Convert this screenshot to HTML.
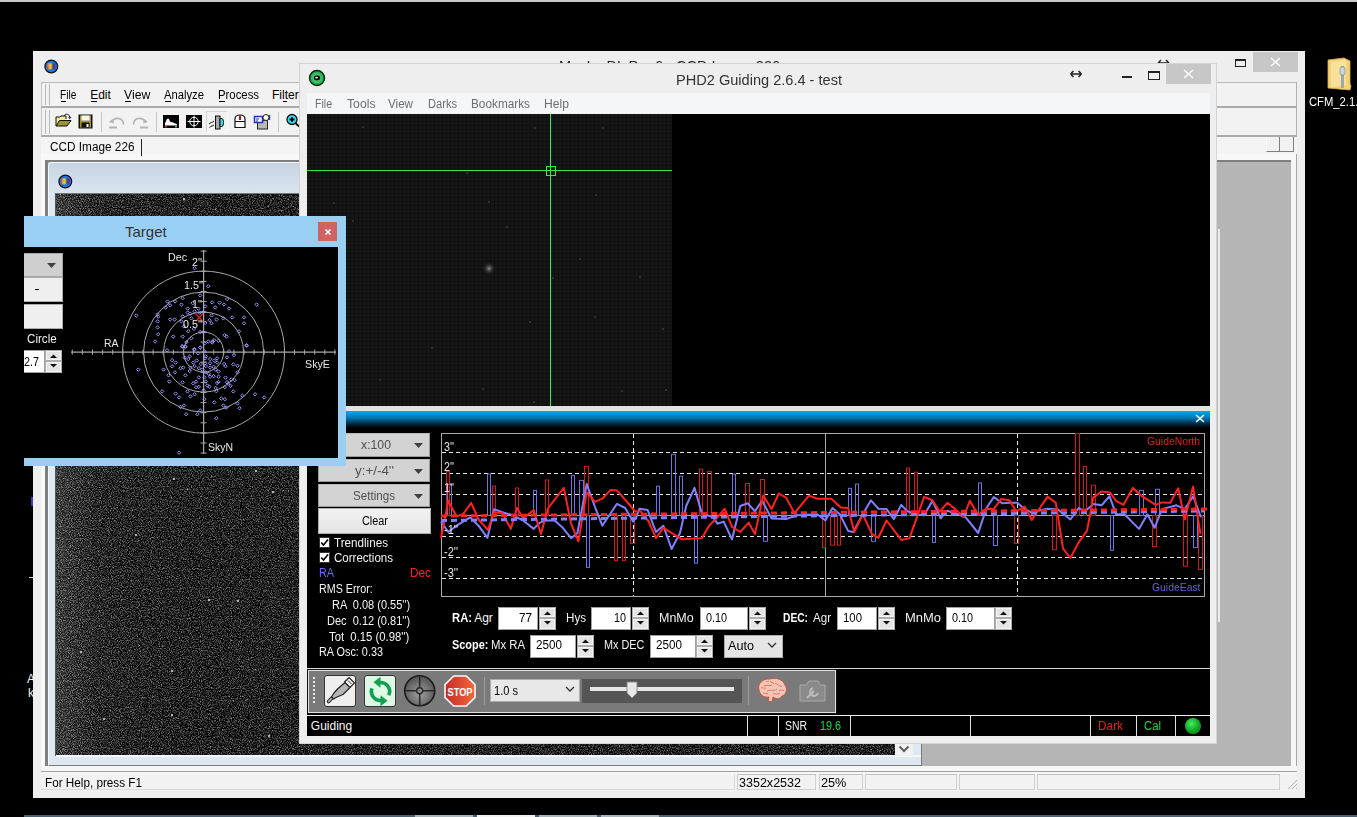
<!DOCTYPE html>
<html><head><meta charset="utf-8">
<style>
*{margin:0;padding:0;box-sizing:border-box}
html,body{width:1357px;height:817px;overflow:hidden;background:#000;font-family:"Liberation Sans",sans-serif;font-size:12px;color:#000;position:relative}
.a{position:absolute}
.t{position:absolute;line-height:1;white-space:pre}
svg{position:absolute;overflow:visible}
</style></head><body>
<div class="a" style="left:0px;top:0px;width:1357px;height:2px;background:#cacaca"></div>
<div class="a" style="left:24px;top:815px;width:1333px;height:2px;background:#4a6172"></div>
<div class="a" style="left:415px;top:815px;width:58px;height:2px;background:#a9b5bd"></div>
<div class="a" style="left:477px;top:815px;width:58px;height:2px;background:#f2f2f2"></div>
<div class="a" style="left:539px;top:815px;width:58px;height:2px;background:#a9b5bd"></div>
<div class="a" style="left:601px;top:815px;width:58px;height:2px;background:#a9b5bd"></div>
<div class="a" style="left:31px;top:497px;width:2px;height:9px;background:#3040c0"></div>
<div class="t" style="left:27.00px;top:672.84px;font-size:12px;color:#f0f0f0;">A</div>
<div class="t" style="left:28.00px;top:686.84px;font-size:12px;color:#f0f0f0;">k</div>
<div class="a" style="left:29px;top:577px;width:4px;height:1px;background:#d0d0d0"></div>
<div class="a" style="left:33px;top:51px;width:1272px;height:747px;background:#eeeeee"></div>
<svg style="left:44px;top:59px" width="15" height="15"><defs><linearGradient id="rb" x1="0" x2="1"><stop offset="0" stop-color="#f04a30"/><stop offset="0.3" stop-color="#f8b040"/><stop offset="0.45" stop-color="#d8d040"/><stop offset="0.62" stop-color="#30a040"/><stop offset="0.7" stop-color="#2050b0"/><stop offset="0.78" stop-color="#8020a0"/><stop offset="1" stop-color="#8020a0"/></linearGradient></defs><circle cx="7.3" cy="7.5" r="6.4" fill="#1a78e0" stroke="#111" stroke-width="1.2"/><rect x="3.2" y="4.3" width="8.3" height="6" fill="url(#rb)"/></svg>
<div class="t" style="left:558.60px;top:58.30px;font-size:15px;color:#222;transform:scaleX(0.9664);transform-origin:0 0;">MaxIm DL Pro 6 - CCD Image 226</div>
<div class="a" style="left:1235px;top:59px;width:11px;height:8px;border:1px solid #222;border-top-width:2px"></div>
<div class="a" style="left:1253px;top:52px;width:45px;height:20px;background:#c7c7c7"></div>
<svg style="left:1270px;top:57px" width="11" height="10"><path d="M1 1L10 9M10 1L1 9" stroke="#fff" stroke-width="1.4"/></svg>
<svg style="left:1157px;top:59px" width="13" height="8"><path d="M1 4H12M1 4L4 1M1 4L4 7M12 4L9 1M12 4L9 7" stroke="#222" stroke-width="1.4" fill="none"/></svg>
<div class="a" style="left:41px;top:82px;width:1256px;height:26px;background:#f2f2f2;border-top:1px solid #b8b8b8;border-left:1px solid #c4c4c4;border-right:1px solid #b0b0b0;border-bottom:2px solid #ababab"></div>
<div class="a" style="left:45px;top:84px;width:1px;height:21px;background:#b8b8b8"></div>
<div class="a" style="left:49px;top:84px;width:1px;height:21px;background:#b8b8b8"></div>
<div class="t" style="left:60.10px;top:88.84px;font-size:12px;color:#000;transform:scaleX(0.8426);transform-origin:0 0;">File</div>
<div class="t" style="left:90.20px;top:88.84px;font-size:12px;color:#000;">Edit</div>
<div class="t" style="left:124.30px;top:88.84px;font-size:12px;color:#000;transform:scaleX(1.0195);transform-origin:0 0;">View</div>
<div class="t" style="left:164.00px;top:88.84px;font-size:12px;color:#000;transform:scaleX(0.9367);transform-origin:0 0;">Analyze</div>
<div class="t" style="left:218.00px;top:88.84px;font-size:12px;color:#000;transform:scaleX(0.9456);transform-origin:0 0;">Process</div>
<div class="t" style="left:272.00px;top:88.84px;font-size:12px;color:#000;">Filter</div>
<div class="a" style="left:61px;top:101px;width:5px;height:1px;background:#000"></div>
<div class="a" style="left:91px;top:101px;width:6px;height:1px;background:#000"></div>
<div class="a" style="left:125px;top:101px;width:6px;height:1px;background:#000"></div>
<div class="a" style="left:165px;top:101px;width:6px;height:1px;background:#000"></div>
<div class="a" style="left:219px;top:101px;width:6px;height:1px;background:#000"></div>
<div class="a" style="left:283px;top:101px;width:4px;height:1px;background:#000"></div>
<div class="a" style="left:41px;top:108px;width:1256px;height:29px;background:#f2f2f2;border-left:1px solid #c4c4c4;border-right:1px solid #b0b0b0;border-bottom:2px solid #ababab"></div>
<div class="a" style="left:45px;top:110px;width:1px;height:24px;background:#b8b8b8"></div>
<div class="a" style="left:49px;top:110px;width:1px;height:24px;background:#b8b8b8"></div>
<div class="a" style="left:101px;top:112px;width:1px;height:20px;background:#c6c6c6"></div>
<div class="a" style="left:156px;top:112px;width:1px;height:20px;background:#c6c6c6"></div>
<div class="a" style="left:278px;top:112px;width:1px;height:20px;background:#c6c6c6"></div>
<div class="a" style="left:206px;top:111px;width:22px;height:21px;background:#f2f2f2;border:1px solid #d6d6d6;border-right-color:#f8f8f8;border-bottom-color:#f8f8f8"></div>
<svg style="left:55px;top:113px" width="17" height="15"><path d="M1 13V4H5L6 3H11V6" fill="#f4ec98" stroke="#111" stroke-width="1"/><path d="M1 13L4.5 7.5H16L12 13Z" fill="#9a9434" stroke="#111" stroke-width="1"/><path d="M9 3C10 0.5 13 0.5 14.5 3L15 5M13.5 4.5L15 5.5L16 4" stroke="#111" stroke-width="1" fill="none"/></svg>
<svg style="left:78px;top:114px" width="16" height="15"><rect x="0.5" y="0.5" width="14" height="14" fill="#111"/><rect x="2" y="1.5" width="11" height="12" fill="#a09434"/><rect x="3.5" y="1.5" width="8" height="5" fill="#f4f4f4"/><rect x="3.5" y="8.5" width="8" height="5" fill="#111"/><rect x="8.5" y="10" width="2" height="3" fill="#f4f4f4"/></svg>
<svg style="left:108px;top:116px" width="18" height="13"><path d="M4 6A6 6 0 0 1 15.5 8.5" stroke="#b4b4b4" stroke-width="1.6" fill="none"/><path d="M1 6L4.5 3L6 7.5Z" fill="#b4b4b4"/><rect x="1" y="10.5" width="8" height="2" fill="#b4b4b4"/></svg>
<svg style="left:131px;top:116px" width="18" height="13"><path d="M14 6A6 6 0 0 0 2.5 8.5" stroke="#b4b4b4" stroke-width="1.6" fill="none"/><path d="M17 6L13.5 3L12 7.5Z" fill="#b4b4b4"/><rect x="9" y="10.5" width="8" height="2" fill="#b4b4b4"/></svg>
<svg style="left:163px;top:115px" width="16" height="14"><rect width="16" height="13" fill="#000"/><path d="M2 10.5V8C3 7 3.5 3.5 5 3.5C6.5 3.5 6.5 7 8 7C10 7 11 8.5 14 9V10.5Z" fill="#fff"/><rect x="2" y="11" width="2" height="1.5" fill="#e02020"/><rect x="12" y="11" width="2" height="1.5" fill="#20d040"/></svg>
<svg style="left:186px;top:115px" width="16" height="13"><rect width="16" height="13" fill="#000"/><circle cx="8" cy="6.5" r="4.2" stroke="#fff" stroke-width="1" fill="none"/><path d="M1.5 6.5H14.5M8 0.5V12.5" stroke="#fff" stroke-width="1"/></svg>
<svg style="left:208px;top:115px" width="18" height="15"><path d="M1 9C3 7 4 8 6 6M1.5 12.5C3.5 10.5 4.5 11.5 6 10" stroke="#111" stroke-width="1" fill="none"/><rect x="7.5" y="1" width="4.5" height="13" fill="#a8a8a8" stroke="#111" stroke-width="1"/><path d="M12 3.5H14C16 4 16 11 14 11.5H12Z" fill="#40d8e8" stroke="#111" stroke-width="1"/></svg>
<svg style="left:234px;top:114px" width="12" height="15"><path d="M1 13.5V5C1 2 3 1 6 1C9 1 11 2 11 5V13.5Z" fill="#fff" stroke="#111" stroke-width="1.2"/><rect x="5" y="1.5" width="2" height="4.5" fill="#b01818"/><path d="M1 7.5H11" stroke="#111" stroke-width="1"/></svg>
<svg style="left:254px;top:113px" width="18" height="17"><rect x="3.5" y="7.5" width="10" height="8.5" fill="#b8b8b8" stroke="#222" stroke-width="1"/><rect x="0.5" y="3.5" width="8" height="6" fill="#fff" stroke="#2030c0" stroke-width="1.5"/><path d="M2 6H5M2 8H4" stroke="#2030c0" stroke-width="1"/><circle cx="12" cy="4.5" r="3" fill="#fff" stroke="#222" stroke-width="1"/><path d="M15.5 2V7" stroke="#2030c0" stroke-width="1.4"/></svg>
<svg style="left:286px;top:113px" width="14" height="15"><circle cx="6" cy="6.5" r="5" fill="#30e0f0" stroke="#111" stroke-width="1.3"/><path d="M3.5 6.5H8.5M6 4V9" stroke="#000" stroke-width="1.8"/><path d="M9.5 10L13 13.5" stroke="#111" stroke-width="1.8"/></svg>
<div class="a" style="left:41px;top:137px;width:1256px;height:23px;background:#f4f4f4"></div>
<div class="a" style="left:41px;top:154px;width:1256px;height:7px;background:#f8f8f8"></div>
<div class="t" style="left:50.20px;top:140.84px;font-size:12px;color:#000;transform:scaleX(0.9820);transform-origin:0 0;">CCD Image 226</div>
<div class="a" style="left:141px;top:139px;width:1px;height:17px;background:#222"></div>
<div class="a" style="left:1266px;top:137px;width:28px;height:15px;background:#f2f2f2;border-bottom:1px solid #808080;border-right:1px solid #808080;border-left:1px solid #fff"></div>
<div class="a" style="left:1279px;top:137px;width:1px;height:14px;background:#808080"></div>
<div class="a" style="left:41px;top:154px;width:4px;height:617px;background:#f9f9f9"></div>
<div class="a" style="left:45px;top:160px;width:1246px;height:606px;background:#b5b5b5;border-top:2px solid #7f7f7f;border-left:3px solid #7f7f7f"></div>
<div class="a" style="left:1291px;top:160px;width:5px;height:611px;background:#f6f6f6"></div>
<div class="a" style="left:1218px;top:229px;width:2px;height:393px;background:#ececec"></div>
<div class="a" style="left:1296px;top:154px;width:1px;height:618px;background:#a9a9a9"></div>
<div class="a" style="left:41px;top:766px;width:1256px;height:5px;background:#f6f6f6"></div>
<div class="a" style="left:41px;top:771px;width:1256px;height:1px;background:#a0a0a0"></div>
<div class="a" style="left:48px;top:162px;width:874px;height:604px;background:linear-gradient(#c6d4e1 0px,#d9e5f1 30px,#dde8f3 40px);border-right:1px solid #7a7a7a;border-bottom:1px solid #7a7a7a;border-top-left-radius:4px;border-top:1px solid #f4f8fc;border-left:1px solid #f4f8fc"></div>
<div class="a" style="left:55px;top:193px;width:840px;height:563px;background:#2a2a2a;border-left:1px solid #555;border-top:1px solid #777"></div>
<svg style="left:56px;top:194px" width="839" height="562"><filter id="nz" color-interpolation-filters="sRGB" x="0" y="0" width="100%" height="100%"><feTurbulence type="fractalNoise" baseFrequency="0.9" numOctaves="2" seed="7"/><feColorMatrix type="matrix" values="1.3 0 0 0 -0.53  1.3 0 0 0 -0.53  1.3 0 0 0 -0.53  0 0 0 0 1"/></filter><rect width="839" height="562" filter="url(#nz)"/><rect width="839" height="562" fill="url(#vg)"/><defs><linearGradient id="vg" x1="0" x2="1"><stop offset="0" stop-color="#fff" stop-opacity="0.14"/><stop offset="0.05" stop-color="#fff" stop-opacity="0.03"/><stop offset="0.15" stop-color="#fff" stop-opacity="0"/></linearGradient></defs><rect x="115" y="476" width="2" height="2" fill="#b4b4b4"/><rect x="115" y="520" width="2" height="2" fill="#b4b4b4"/><rect x="218" y="194" width="1" height="1" fill="#b4b4b4"/><rect x="47" y="524" width="2" height="2" fill="#b4b4b4"/><rect x="121" y="190" width="2" height="2" fill="#b4b4b4"/><rect x="24" y="457" width="2" height="2" fill="#b4b4b4"/><rect x="77" y="145" width="1" height="1" fill="#b4b4b4"/><rect x="23" y="551" width="1" height="1" fill="#b4b4b4"/><rect x="207" y="42" width="2" height="2" fill="#b4b4b4"/><rect x="152" y="405" width="2" height="2" fill="#b4b4b4"/><rect x="115" y="161" width="1" height="1" fill="#b4b4b4"/><rect x="159" y="15" width="1" height="1" fill="#b4b4b4"/><rect x="212" y="541" width="2" height="2" fill="#b4b4b4"/><rect x="16" y="60" width="1" height="1" fill="#b4b4b4"/><rect x="9" y="194" width="2" height="2" fill="#b4b4b4"/><rect x="225" y="247" width="1" height="1" fill="#b4b4b4"/><rect x="153" y="30" width="2" height="2" fill="#b4b4b4"/><rect x="199" y="475" width="1" height="1" fill="#b4b4b4"/><rect x="83" y="451" width="1" height="1" fill="#b4b4b4"/><rect x="151" y="200" width="2" height="2" fill="#b4b4b4"/><rect x="132" y="239" width="2" height="2" fill="#b4b4b4"/><rect x="163" y="301" width="1" height="1" fill="#b4b4b4"/><rect x="127" y="4" width="2" height="2" fill="#b4b4b4"/><rect x="169" y="87" width="1" height="1" fill="#b4b4b4"/><rect x="117" y="284" width="2" height="2" fill="#b4b4b4"/><rect x="104" y="85" width="2" height="2" fill="#b4b4b4"/><rect x="181" y="260" width="2" height="2" fill="#b4b4b4"/><rect x="80" y="235" width="2" height="2" fill="#b4b4b4"/><rect x="131" y="295" width="1" height="1" fill="#b4b4b4"/><rect x="7" y="71" width="1" height="1" fill="#b4b4b4"/><rect x="144" y="110" width="1" height="1" fill="#b4b4b4"/><rect x="102" y="110" width="1" height="1" fill="#b4b4b4"/><rect x="216" y="297" width="2" height="2" fill="#b4b4b4"/><rect x="98" y="68" width="1" height="1" fill="#b4b4b4"/><rect x="4" y="0" width="1" height="1" fill="#b4b4b4"/><rect x="54" y="214" width="1" height="1" fill="#b4b4b4"/><rect x="237" y="53" width="1" height="1" fill="#b4b4b4"/><rect x="120" y="384" width="1" height="1" fill="#b4b4b4"/><rect x="181" y="406" width="2" height="2" fill="#b4b4b4"/><rect x="107" y="74" width="2" height="2" fill="#b4b4b4"/><rect x="144" y="203" width="2" height="2" fill="#b4b4b4"/><rect x="199" y="276" width="2" height="2" fill="#b4b4b4"/><rect x="86" y="89" width="2" height="2" fill="#b4b4b4"/><rect x="79" y="340" width="2" height="2" fill="#b4b4b4"/><rect x="3" y="419" width="1" height="1" fill="#b4b4b4"/></svg>
<div class="a" style="left:56px;top:755px;width:865px;height:2px;background:#f6f9fc"></div>
<div class="a" style="left:895px;top:744px;width:18px;height:12px;background:#f0f0f0"></div>
<svg style="left:898px;top:745px" width="12" height="8"><path d="M1.5 1.5L6 6L10.5 1.5" stroke="#606060" stroke-width="2" fill="none"/></svg>
<svg style="left:58px;top:174px" width="15" height="15"><circle cx="7.3" cy="7.5" r="6.4" fill="#1a78e0" stroke="#111" stroke-width="1.2"/><rect x="3.2" y="4.3" width="8.3" height="6" fill="url(#rb)"/></svg>
<div class="a" style="left:41px;top:772px;width:1256px;height:2px;background:#f6f6f6"></div>
<div class="a" style="left:41px;top:774px;width:1256px;height:1px;background:#f2f2f2"></div>
<div class="a" style="left:41px;top:775px;width:1256px;height:16px;background:#f2f2f2"></div>
<div class="t" style="left:45.10px;top:776.54px;font-size:12px;color:#000;transform:scaleX(0.9761);transform-origin:0 0;">For Help, press F1</div>
<div class="a" style="left:41px;top:774px;width:694px;height:16px;border-bottom:1px solid #dadada;border-right:1px solid #dadada"></div>
<div class="a" style="left:737px;top:774px;width:79px;height:16px;border:1px solid #d0d0d0;border-top-color:#c0c0c0"></div>
<div class="a" style="left:819px;top:774px;width:44px;height:16px;border:1px solid #d0d0d0;border-top-color:#c0c0c0"></div>
<div class="a" style="left:865px;top:774px;width:92px;height:16px;border:1px solid #d0d0d0;border-top-color:#c0c0c0"></div>
<div class="a" style="left:959px;top:774px;width:76px;height:16px;border:1px solid #d0d0d0;border-top-color:#c0c0c0"></div>
<div class="a" style="left:1037px;top:774px;width:243px;height:16px;border:1px solid #d0d0d0;border-top-color:#c0c0c0"></div>
<div class="t" style="left:738.70px;top:776.84px;font-size:12px;color:#000;transform:scaleX(1.0439);transform-origin:0 0;">3352x2532</div>
<div class="t" style="left:821.00px;top:776.84px;font-size:12px;color:#000;transform:scaleX(1.0570);transform-origin:0 0;">25%</div>
<svg style="left:1286px;top:778px" width="12" height="12"><path d="M11 2L2 11M11 6L6 11M11 10L10 11" stroke="#b0b0b0" stroke-width="1"/></svg>
<svg style="left:1327px;top:58px" width="26" height="34"><path d="M1 2L17 0L23 3L23 26L24 28L23 32L1 30Z" fill="#f3d27a" stroke="#d8b050" stroke-width="0.8"/><path d="M4 4L19 2L19 27L4 29Z" fill="#f8e29a"/><rect x="14" y="8" width="3" height="22" fill="#9aa8b8"/><rect x="13" y="9" width="5" height="8" rx="2" fill="#c8d4e0" stroke="#708090" stroke-width="0.6"/></svg>
<div class="t" style="left:1308.60px;top:96.44px;font-size:12px;color:#fff;transform:scaleX(0.9372);transform-origin:0 0;">CFM_2.1.c</div>
<div class="a" style="left:299px;top:63px;width:918px;height:681px;background:#eeeeee;border:1px solid #d4d4d4"></div>
<svg style="left:308px;top:69px" width="18" height="18"><defs><radialGradient id="gg"><stop offset="0.3" stop-color="#60d080"/><stop offset="1" stop-color="#10a040"/></radialGradient></defs><circle cx="9" cy="9" r="7.5" fill="url(#gg)" stroke="#0a2a10" stroke-width="1.4"/><ellipse cx="9" cy="8.8" rx="3.2" ry="2.6" fill="#111"/><ellipse cx="8.6" cy="8.6" rx="1.4" ry="0.9" fill="#eee"/></svg>
<div class="t" style="left:675.50px;top:71.50px;font-size:15px;color:#333;transform:scaleX(0.9712);transform-origin:0 0;">PHD2 Guiding 2.6.4 - test</div>
<svg style="left:1069px;top:70px" width="14" height="8"><path d="M1.5 4H12.5M1.5 4L4.5 1M1.5 4L4.5 7M12.5 4L9.5 1M12.5 4L9.5 7" stroke="#222" stroke-width="1.5" fill="none"/></svg>
<div class="a" style="left:1122px;top:76px;width:10px;height:2px;background:#222"></div>
<div class="a" style="left:1148px;top:71px;width:12px;height:9px;border:1px solid #222;border-top-width:2px"></div>
<div class="a" style="left:1166px;top:64px;width:45px;height:20px;background:#c7c7c7"></div>
<svg style="left:1183px;top:69px" width="11" height="10"><path d="M1 1L10 9M10 1L1 9" stroke="#fff" stroke-width="1.4"/></svg>
<div class="a" style="left:307px;top:93px;width:903px;height:21px;background:#f5f6f7"></div>
<div class="t" style="left:315.00px;top:97.84px;font-size:12px;color:#6d6d6d;transform:scaleX(0.8788);transform-origin:0 0;">File</div>
<div class="t" style="left:346.50px;top:97.84px;font-size:12px;color:#6d6d6d;transform:scaleX(1.0173);transform-origin:0 0;">Tools</div>
<div class="t" style="left:388.00px;top:97.84px;font-size:12px;color:#6d6d6d;transform:scaleX(0.9691);transform-origin:0 0;">View</div>
<div class="t" style="left:428.00px;top:97.84px;font-size:12px;color:#6d6d6d;transform:scaleX(0.9252);transform-origin:0 0;">Darks</div>
<div class="t" style="left:471.00px;top:97.84px;font-size:12px;color:#6d6d6d;transform:scaleX(0.9828);transform-origin:0 0;">Bookmarks</div>
<div class="t" style="left:544.00px;top:97.84px;font-size:12px;color:#6d6d6d;transform:scaleX(1.0127);transform-origin:0 0;">Help</div>
<div class="a" style="left:307px;top:114px;width:903px;height:293px;background:#000"></div>
<div class="a" style="left:307px;top:114px;width:365px;height:292px;background:repeating-linear-gradient(90deg,transparent 0px,transparent 3px,rgba(0,0,0,0.25) 3px,rgba(0,0,0,0.25) 4px),repeating-linear-gradient(#161616 0px,#161616 3px,#101010 3px,#101010 4px)"></div>
<div class="a" style="left:307px;top:406px;width:903px;height:5px;background:#e2e2e2"></div>
<svg style="left:0;top:0" width="1357" height="817"><defs><radialGradient id="sg"><stop offset="0" stop-color="#909090"/><stop offset="0.25" stop-color="#505050"/><stop offset="1" stop-color="#181818" stop-opacity="0"/></radialGradient></defs><rect x="362" y="126" width="2" height="2" fill="#303030"/><rect x="534" y="127" width="2" height="2" fill="#303030"/><rect x="602" y="127" width="2" height="2" fill="#303030"/><rect x="466" y="172" width="2" height="2" fill="#303030"/><rect x="595" y="194" width="2" height="2" fill="#303030"/><rect x="333" y="202" width="2" height="2" fill="#303030"/><rect x="352" y="220" width="2" height="2" fill="#303030"/><rect x="488" y="201" width="2" height="2" fill="#303030"/><rect x="506" y="226" width="2" height="2" fill="#303030"/><rect x="579" y="258" width="2" height="2" fill="#303030"/><rect x="552" y="277" width="2" height="2" fill="#303030"/><rect x="639" y="276" width="2" height="2" fill="#303030"/><rect x="529" y="321" width="2" height="2" fill="#303030"/><rect x="594" y="316" width="2" height="2" fill="#303030"/><rect x="379" y="379" width="2" height="2" fill="#303030"/><rect x="431" y="347" width="2" height="2" fill="#303030"/><rect x="662" y="328" width="2" height="2" fill="#303030"/><rect x="621" y="390" width="2" height="2" fill="#303030"/><rect x="665" y="389" width="2" height="2" fill="#303030"/><rect x="533" y="401" width="2" height="2" fill="#303030"/><rect x="482" y="388" width="2" height="2" fill="#303030"/><circle cx="489" cy="268.5" r="7" fill="url(#sg)"/></svg>
<div class="a" style="left:307px;top:170px;width:365px;height:1px;background:#2cf048"></div>
<div class="a" style="left:550px;top:114px;width:1px;height:292px;background:#2cf048"></div>
<div class="a" style="left:546px;top:166px;width:10px;height:10px;border:1px solid #2cf048"></div>
<div class="a" style="left:307px;top:411px;width:903px;height:258px;background:#000"></div>
<div class="a" style="left:307px;top:411px;width:903px;height:17px;background:linear-gradient(#00a8f2,#0078b0 40%,#002a40 75%,#000)"></div>
<svg style="left:1195px;top:414px" width="10" height="9"><path d="M1 1L9 8M9 1L1 8" stroke="#fff" stroke-width="1.6"/></svg>
<div class="a" style="left:318px;top:433px;width:112px;height:24px;background:#d3d3d3;border:1px solid #9a9a9a;border-top-color:#b8b8b8"></div>
<div class="t" style="left:361.00px;top:439.14px;font-size:12px;color:#505050;transform:scaleX(1.0218);transform-origin:0 0;">x:100</div>
<svg style="left:414px;top:443.0px" width="10" height="6"><path d="M0 0H9L4.5 5Z" fill="#404040"/></svg>
<div class="a" style="left:318px;top:459px;width:112px;height:23px;background:#d3d3d3;border:1px solid #9a9a9a;border-top-color:#b8b8b8"></div>
<div class="t" style="left:355.00px;top:464.64px;font-size:12px;color:#505050;transform:scaleX(1.1163);transform-origin:0 0;">y:+/-4''</div>
<svg style="left:414px;top:468.5px" width="10" height="6"><path d="M0 0H9L4.5 5Z" fill="#404040"/></svg>
<div class="a" style="left:318px;top:484px;width:112px;height:23px;background:#d3d3d3;border:1px solid #9a9a9a;border-top-color:#b8b8b8"></div>
<div class="t" style="left:353.00px;top:489.64px;font-size:12px;color:#505050;transform:scaleX(0.9686);transform-origin:0 0;">Settings</div>
<svg style="left:414px;top:493.5px" width="10" height="6"><path d="M0 0H9L4.5 5Z" fill="#404040"/></svg>
<div class="a" style="left:318px;top:508px;width:113px;height:26px;background:linear-gradient(#f2f2f2,#e4e4e4);border:1px solid #adadad"></div>
<div class="t" style="left:361.50px;top:515.14px;font-size:12px;color:#000;transform:scaleX(0.9063);transform-origin:0 0;">Clear</div>
<div class="a" style="left:319px;top:537px;width:11px;height:11px;background:#fff;border:1px solid #333"></div>
<svg style="left:320px;top:538px" width="9" height="9"><path d="M1.2 4.5L3.5 7L8 1.5" stroke="#000" stroke-width="1.6" fill="none"/></svg>
<div class="t" style="left:334.10px;top:536.64px;font-size:12px;color:#f4f4f4;transform:scaleX(0.9713);transform-origin:0 0;">Trendlines</div>
<div class="a" style="left:319px;top:552px;width:11px;height:11px;background:#fff;border:1px solid #333"></div>
<svg style="left:320px;top:553px" width="9" height="9"><path d="M1.2 4.5L3.5 7L8 1.5" stroke="#000" stroke-width="1.6" fill="none"/></svg>
<div class="t" style="left:334.10px;top:551.64px;font-size:12px;color:#f4f4f4;transform:scaleX(0.9615);transform-origin:0 0;">Corrections</div>
<div class="t" style="left:318.70px;top:566.54px;font-size:12px;color:#6b6bff;transform:scaleX(0.8997);transform-origin:0 0;">RA</div>
<div class="t" style="left:410.00px;top:566.54px;font-size:12px;color:#ff2020;transform:scaleX(0.9839);transform-origin:0 0;">Dec</div>
<div class="t" style="left:318.70px;top:582.54px;font-size:12px;color:#f4f4f4;transform:scaleX(0.8950);transform-origin:0 0;">RMS Error:</div>
<div class="t" style="left:331.50px;top:598.54px;font-size:12px;color:#f4f4f4;transform:scaleX(0.9168);transform-origin:0 0;">RA  0.08 (0.55'')</div>
<div class="t" style="left:326.50px;top:614.84px;font-size:12px;color:#f4f4f4;transform:scaleX(0.9179);transform-origin:0 0;">Dec  0.12 (0.81'')</div>
<div class="t" style="left:329.40px;top:630.54px;font-size:12px;color:#f4f4f4;transform:scaleX(0.9414);transform-origin:0 0;">Tot  0.15 (0.98'')</div>
<div class="t" style="left:318.70px;top:646.24px;font-size:12px;color:#f4f4f4;transform:scaleX(0.9052);transform-origin:0 0;">RA Osc: 0.33</div>
<svg style="left:0px;top:0px" width="1357" height="817" viewBox="0 0 1357 817"><rect x="441.5" y="433.5" width="763" height="163" fill="#000" stroke="#a8a8a8" stroke-width="1"/><line x1="442" y1="452.5" x2="1204" y2="452.5" stroke="#e8e8e8" stroke-width="1" stroke-dasharray="4 3"/><line x1="442" y1="473.5" x2="1204" y2="473.5" stroke="#e8e8e8" stroke-width="1" stroke-dasharray="4 3"/><line x1="442" y1="494.5" x2="1204" y2="494.5" stroke="#e8e8e8" stroke-width="1" stroke-dasharray="4 3"/><line x1="442" y1="536.5" x2="1204" y2="536.5" stroke="#e8e8e8" stroke-width="1" stroke-dasharray="4 3"/><line x1="442" y1="557.5" x2="1204" y2="557.5" stroke="#e8e8e8" stroke-width="1" stroke-dasharray="4 3"/><line x1="442" y1="578.5" x2="1204" y2="578.5" stroke="#e8e8e8" stroke-width="1" stroke-dasharray="4 3"/><line x1="442" y1="515.5" x2="1204" y2="515.5" stroke="#a8a8a8" stroke-width="1"/><line x1="633.5" y1="434" x2="633.5" y2="596" stroke="#e8e8e8" stroke-width="1" stroke-dasharray="4 3"/><line x1="1017.5" y1="434" x2="1017.5" y2="596" stroke="#e8e8e8" stroke-width="1" stroke-dasharray="4 3"/><line x1="825.5" y1="434" x2="825.5" y2="596" stroke="#a8a8a8" stroke-width="1"/><rect x="447.5" y="484.5" width="4" height="31.0" fill="none" stroke="#7070e8" stroke-width="1"/><rect x="487.5" y="474.0" width="3" height="41.5" fill="none" stroke="#7070e8" stroke-width="1"/><rect x="533.5" y="490.4" width="3" height="25.1" fill="none" stroke="#7070e8" stroke-width="1"/><rect x="571.5" y="475.4" width="3" height="40.1" fill="none" stroke="#7070e8" stroke-width="1"/><rect x="579.5" y="480.4" width="4" height="35.1" fill="none" stroke="#7070e8" stroke-width="1"/><rect x="586.5" y="515.5" width="3" height="51.9" fill="none" stroke="#7070e8" stroke-width="1"/><rect x="656.5" y="486.2" width="3" height="29.3" fill="none" stroke="#7070e8" stroke-width="1"/><rect x="671.5" y="454.3" width="4" height="61.2" fill="none" stroke="#7070e8" stroke-width="1"/><rect x="679.5" y="476.2" width="3" height="39.3" fill="none" stroke="#7070e8" stroke-width="1"/><rect x="694.5" y="515.5" width="3" height="47.7" fill="none" stroke="#7070e8" stroke-width="1"/><rect x="732.5" y="474.1" width="3" height="41.4" fill="none" stroke="#7070e8" stroke-width="1"/><rect x="763.5" y="515.5" width="4" height="25.8" fill="none" stroke="#7070e8" stroke-width="1"/><rect x="848.5" y="488.3" width="3" height="27.2" fill="none" stroke="#7070e8" stroke-width="1"/><rect x="855.5" y="484.1" width="3" height="31.4" fill="none" stroke="#7070e8" stroke-width="1"/><rect x="871.5" y="515.5" width="4" height="25.8" fill="none" stroke="#7070e8" stroke-width="1"/><rect x="932.5" y="515.5" width="3" height="26.9" fill="none" stroke="#7070e8" stroke-width="1"/><rect x="978.5" y="483.0" width="3" height="32.5" fill="none" stroke="#7070e8" stroke-width="1"/><rect x="993.5" y="515.5" width="4" height="30.0" fill="none" stroke="#7070e8" stroke-width="1"/><rect x="1110.5" y="515.5" width="3" height="34.8" fill="none" stroke="#7070e8" stroke-width="1"/><rect x="1139.5" y="490.4" width="4" height="25.1" fill="none" stroke="#7070e8" stroke-width="1"/><rect x="1155.5" y="489.3" width="4" height="26.2" fill="none" stroke="#7070e8" stroke-width="1"/><rect x="1193.5" y="515.5" width="4" height="32.1" fill="none" stroke="#7070e8" stroke-width="1"/><rect x="446.5" y="471.6" width="3" height="43.9" fill="none" stroke="#d81818" stroke-width="1"/><rect x="492.5" y="486.0" width="3" height="29.5" fill="none" stroke="#d81818" stroke-width="1"/><rect x="515.5" y="488.0" width="3" height="27.5" fill="none" stroke="#d81818" stroke-width="1"/><rect x="545.5" y="480.0" width="3" height="35.5" fill="none" stroke="#d81818" stroke-width="1"/><rect x="584.5" y="466.4" width="4" height="49.1" fill="none" stroke="#d81818" stroke-width="1"/><rect x="614.5" y="515.5" width="3" height="45.2" fill="none" stroke="#d81818" stroke-width="1"/><rect x="622.5" y="515.5" width="3" height="45.2" fill="none" stroke="#d81818" stroke-width="1"/><rect x="630.5" y="515.5" width="4" height="27.9" fill="none" stroke="#d81818" stroke-width="1"/><rect x="699.5" y="469.1" width="3" height="46.4" fill="none" stroke="#d81818" stroke-width="1"/><rect x="707.5" y="471.6" width="4" height="43.9" fill="none" stroke="#d81818" stroke-width="1"/><rect x="745.5" y="483.5" width="4" height="32.0" fill="none" stroke="#d81818" stroke-width="1"/><rect x="760.5" y="479.5" width="4" height="36.0" fill="none" stroke="#d81818" stroke-width="1"/><rect x="822.5" y="515.5" width="3" height="32.1" fill="none" stroke="#d81818" stroke-width="1"/><rect x="830.5" y="515.5" width="4" height="29.6" fill="none" stroke="#d81818" stroke-width="1"/><rect x="837.5" y="515.5" width="3" height="29.6" fill="none" stroke="#d81818" stroke-width="1"/><rect x="906.5" y="468.1" width="3" height="47.4" fill="none" stroke="#d81818" stroke-width="1"/><rect x="914.5" y="472.2" width="3" height="43.3" fill="none" stroke="#d81818" stroke-width="1"/><rect x="1014.5" y="515.5" width="4" height="27.9" fill="none" stroke="#d81818" stroke-width="1"/><rect x="1052.5" y="515.5" width="4" height="34.2" fill="none" stroke="#d81818" stroke-width="1"/><rect x="1075.5" y="433.5" width="4" height="82.0" fill="none" stroke="#d81818" stroke-width="1"/><rect x="1083.5" y="466.4" width="3" height="49.1" fill="none" stroke="#d81818" stroke-width="1"/><rect x="1091.5" y="485.2" width="4" height="30.3" fill="none" stroke="#d81818" stroke-width="1"/><rect x="1152.5" y="515.5" width="4" height="31.0" fill="none" stroke="#d81818" stroke-width="1"/><rect x="1183.5" y="515.5" width="4" height="50.8" fill="none" stroke="#d81818" stroke-width="1"/><rect x="1198.5" y="515.5" width="4" height="53.9" fill="none" stroke="#d81818" stroke-width="1"/><polyline points="441.0,521.6 448.3,532.0 456.6,525.7 470.2,517.4 478.5,525.7 487.5,537.8 494.1,509.1 502.4,512.2 512.8,515.3 523.2,520.5 533.7,528.9 539.9,522.6 546.1,520.5 554.5,520.5 562.8,527.8 571.1,538.2 577.4,533.0 586.7,484.1 595.0,507.0 602.3,525.7 616.9,503.9 625.2,508.0 633.1,521.6 636.2,517.4 639.4,508.7 647.7,510.1 656.0,532.0 663.3,525.7 671.6,549.0 680.0,533.0 686.2,506.0 694.5,487.9 701.8,513.2 713.2,517.4 717.4,523.7 723.7,521.6 732.0,539.3 740.3,506.0 747.6,503.3 754.9,511.2 762.2,500.8 771.5,518.4 786.1,519.1 796.5,515.3 817.3,514.3 825.4,520.5 832.5,508.0 839.8,514.3 848.1,530.9 853.3,532.0 862.7,514.3 871.0,500.3 878.3,508.7 886.6,509.1 893.9,519.1 901.2,504.9 907.4,511.2 915.7,514.3 924.1,515.3 932.4,500.8 940.7,518.4 947.0,510.7 955.3,513.2 965.7,517.4 978.2,533.0 986.5,508.0 993.8,497.0 1002.1,503.3 1010.0,502.8 1017.3,502.8 1024.6,509.1 1030.8,512.2 1047.5,508.7 1057.9,509.5 1070.4,519.5 1078.7,508.0 1084.9,511.6 1093.2,503.9 1101.6,505.3 1109.5,496.2 1116.1,514.3 1124.5,514.3 1139.0,528.9 1147.4,514.3 1154.6,527.8 1161.9,509.1 1176.5,505.3 1184.8,509.1 1193.1,496.2 1201.0,517.4" fill="none" stroke="#8080ff" stroke-width="2" stroke-linejoin="round"/><polyline points="441.0,538.0 448.3,500.8 456.6,516.4 462.9,514.3 471.2,502.8 478.5,519.5 487.9,529.9 494.1,512.2 502.4,513.2 510.8,528.9 517.0,508.0 523.2,518.4 533.7,510.1 540.9,534.0 548.2,508.0 563.8,487.9 571.1,523.7 578.4,541.3 586.7,492.4 595.0,501.8 602.3,498.7 610.7,489.9 616.9,490.4 631.5,507.0 634.6,511.2 640.4,511.2 648.7,521.6 656.0,538.2 663.3,527.8 682.0,539.3 701.8,538.2 709.1,525.7 717.4,517.4 724.7,508.7 732.0,526.8 740.3,532.0 748.6,522.6 754.9,534.1 763.2,495.6 771.5,509.1 778.8,493.5 786.1,497.6 794.4,513.2 809.0,495.6 817.3,498.7 831.4,498.7 840.8,507.4 848.1,508.0 854.3,532.0 862.7,514.3 872.0,534.1 878.3,537.8 886.6,520.5 901.2,539.9 909.5,538.2 924.1,497.0 932.4,500.3 939.7,511.6 947.4,502.8 955.3,509.1 963.6,517.0 969.8,500.8 978.2,514.9 986.5,508.7 993.8,509.1 1001.1,499.1 1009.4,500.3 1016.2,511.2 1024.6,506.6 1031.9,519.9 1047.5,496.6 1055.8,502.8 1063.1,548.6 1070.4,558.0 1078.7,542.4 1087.0,530.9 1093.2,497.6 1101.6,491.4 1109.9,492.4 1116.1,500.8 1123.4,504.9 1132.8,487.9 1141.1,495.6 1155.7,504.9 1161.9,502.4 1170.3,502.8 1178.2,488.3 1184.8,519.5 1193.1,486.6 1200.4,534.0" fill="none" stroke="#ff2020" stroke-width="2" stroke-linejoin="round"/><line x1="441" y1="520.5" x2="1205" y2="511" stroke="#8080ff" stroke-width="3" stroke-dasharray="6 4"/><line x1="441" y1="516" x2="1210" y2="509" stroke="#ff2020" stroke-width="3" stroke-dasharray="6 4"/></svg>
<div class="t" style="left:444.20px;top:440.64px;font-size:12px;color:#e8e8e8;transform:scaleX(0.8877);transform-origin:0 0;">3''</div>
<div class="t" style="left:444.20px;top:461.44px;font-size:12px;color:#e8e8e8;transform:scaleX(0.8877);transform-origin:0 0;">2''</div>
<div class="t" style="left:444.20px;top:482.24px;font-size:12px;color:#e8e8e8;transform:scaleX(0.8877);transform-origin:0 0;">1''</div>
<div class="t" style="left:444.20px;top:523.84px;font-size:12px;color:#e8e8e8;transform:scaleX(0.9171);transform-origin:0 0;">-1''</div>
<div class="t" style="left:444.20px;top:545.84px;font-size:12px;color:#e8e8e8;transform:scaleX(0.9171);transform-origin:0 0;">-2''</div>
<div class="t" style="left:444.20px;top:566.54px;font-size:12px;color:#e8e8e8;transform:scaleX(0.9171);transform-origin:0 0;">-3''</div>
<div class="t" style="left:1146.70px;top:437.14px;font-size:10px;color:#e02020;transform:scaleX(1.0364);transform-origin:0 0;">GuideNorth</div>
<div class="t" style="left:1151.50px;top:583.24px;font-size:10px;color:#6060e0;transform:scaleX(1.0385);transform-origin:0 0;">GuideEast</div>
<div class="t" style="left:451.50px;top:611.64px;font-size:12px;color:#fff;font-weight:bold;transform:scaleX(0.9377);transform-origin:0 0;">RA:</div>
<div class="t" style="left:474.20px;top:611.64px;font-size:12px;color:#f4f4f4;">Agr</div>
<div class="a" style="left:498px;top:607px;width:40px;height:23px;background:#fff;border:1px solid #a0a0a0"></div>
<div class="t" style="left:519.00px;top:611.64px;font-size:12px;color:#000;transform:scaleX(0.9731);transform-origin:0 0;">77</div>
<div class="a" style="left:539px;top:607px;width:17px;height:11px;background:#e4e4e4;border:1px solid #adadad;box-shadow:inset 0 0 0 1px #f4f4f4"></div>
<div class="a" style="left:539px;top:618px;width:17px;height:12px;background:#e4e4e4;border:1px solid #adadad;box-shadow:inset 0 0 0 1px #f4f4f4"></div>
<svg style="left:544px;top:611px" width="8" height="17"><path d="M0 4L3.5 0.5L7 4Z" fill="#111"/><path d="M0 10L3.5 13.5L7 10Z" fill="#111"/></svg>
<div class="t" style="left:566.00px;top:611.64px;font-size:12px;color:#f4f4f4;transform:scaleX(0.9675);transform-origin:0 0;">Hys</div>
<div class="a" style="left:591px;top:607px;width:40px;height:23px;background:#fff;border:1px solid #a0a0a0"></div>
<div class="t" style="left:613.50px;top:611.64px;font-size:12px;color:#000;transform:scaleX(0.8982);transform-origin:0 0;">10</div>
<div class="a" style="left:632px;top:607px;width:17px;height:11px;background:#e4e4e4;border:1px solid #adadad;box-shadow:inset 0 0 0 1px #f4f4f4"></div>
<div class="a" style="left:632px;top:618px;width:17px;height:12px;background:#e4e4e4;border:1px solid #adadad;box-shadow:inset 0 0 0 1px #f4f4f4"></div>
<svg style="left:637px;top:611px" width="8" height="17"><path d="M0 4L3.5 0.5L7 4Z" fill="#111"/><path d="M0 10L3.5 13.5L7 10Z" fill="#111"/></svg>
<div class="t" style="left:659.30px;top:611.64px;font-size:12px;color:#f4f4f4;transform:scaleX(1.0407);transform-origin:0 0;">MnMo</div>
<div class="a" style="left:700px;top:607px;width:48px;height:23px;background:#fff;border:1px solid #a0a0a0"></div>
<div class="t" style="left:706.00px;top:611.64px;font-size:12px;color:#000;transform:scaleX(0.8990);transform-origin:0 0;">0.10</div>
<div class="a" style="left:749px;top:607px;width:17px;height:11px;background:#e4e4e4;border:1px solid #adadad;box-shadow:inset 0 0 0 1px #f4f4f4"></div>
<div class="a" style="left:749px;top:618px;width:17px;height:12px;background:#e4e4e4;border:1px solid #adadad;box-shadow:inset 0 0 0 1px #f4f4f4"></div>
<svg style="left:754px;top:611px" width="8" height="17"><path d="M0 4L3.5 0.5L7 4Z" fill="#111"/><path d="M0 10L3.5 13.5L7 10Z" fill="#111"/></svg>
<div class="t" style="left:783.00px;top:611.64px;font-size:12px;color:#fff;font-weight:bold;transform:scaleX(0.8520);transform-origin:0 0;">DEC:</div>
<div class="t" style="left:813.00px;top:611.64px;font-size:12px;color:#f4f4f4;transform:scaleX(0.9632);transform-origin:0 0;">Agr</div>
<div class="a" style="left:837px;top:607px;width:40px;height:23px;background:#fff;border:1px solid #a0a0a0"></div>
<div class="t" style="left:843.00px;top:611.64px;font-size:12px;color:#000;transform:scaleX(0.9485);transform-origin:0 0;">100</div>
<div class="a" style="left:878px;top:607px;width:17px;height:11px;background:#e4e4e4;border:1px solid #adadad;box-shadow:inset 0 0 0 1px #f4f4f4"></div>
<div class="a" style="left:878px;top:618px;width:17px;height:12px;background:#e4e4e4;border:1px solid #adadad;box-shadow:inset 0 0 0 1px #f4f4f4"></div>
<svg style="left:883px;top:611px" width="8" height="17"><path d="M0 4L3.5 0.5L7 4Z" fill="#111"/><path d="M0 10L3.5 13.5L7 10Z" fill="#111"/></svg>
<div class="t" style="left:905.00px;top:611.64px;font-size:12px;color:#f4f4f4;transform:scaleX(1.0797);transform-origin:0 0;">MnMo</div>
<div class="a" style="left:946px;top:607px;width:49px;height:23px;background:#fff;border:1px solid #a0a0a0"></div>
<div class="t" style="left:952.00px;top:611.64px;font-size:12px;color:#000;transform:scaleX(0.8990);transform-origin:0 0;">0.10</div>
<div class="a" style="left:995px;top:607px;width:17px;height:11px;background:#e4e4e4;border:1px solid #adadad;box-shadow:inset 0 0 0 1px #f4f4f4"></div>
<div class="a" style="left:995px;top:618px;width:17px;height:12px;background:#e4e4e4;border:1px solid #adadad;box-shadow:inset 0 0 0 1px #f4f4f4"></div>
<svg style="left:1000px;top:611px" width="8" height="17"><path d="M0 4L3.5 0.5L7 4Z" fill="#111"/><path d="M0 10L3.5 13.5L7 10Z" fill="#111"/></svg>
<div class="t" style="left:451.50px;top:639.24px;font-size:12px;color:#fff;font-weight:bold;transform:scaleX(0.9096);transform-origin:0 0;">Scope:</div>
<div class="t" style="left:490.80px;top:639.24px;font-size:12px;color:#f4f4f4;transform:scaleX(0.9444);transform-origin:0 0;">Mx RA</div>
<div class="a" style="left:530px;top:635px;width:46px;height:23px;background:#fff;border:1px solid #a0a0a0"></div>
<div class="t" style="left:536.00px;top:639.24px;font-size:12px;color:#000;transform:scaleX(0.9737);transform-origin:0 0;">2500</div>
<div class="a" style="left:577px;top:635px;width:17px;height:11px;background:#e4e4e4;border:1px solid #adadad;box-shadow:inset 0 0 0 1px #f4f4f4"></div>
<div class="a" style="left:577px;top:646px;width:17px;height:12px;background:#e4e4e4;border:1px solid #adadad;box-shadow:inset 0 0 0 1px #f4f4f4"></div>
<svg style="left:582px;top:639px" width="8" height="17"><path d="M0 4L3.5 0.5L7 4Z" fill="#111"/><path d="M0 10L3.5 13.5L7 10Z" fill="#111"/></svg>
<div class="t" style="left:604.40px;top:639.24px;font-size:12px;color:#f4f4f4;transform:scaleX(0.9021);transform-origin:0 0;">Mx DEC</div>
<div class="a" style="left:650px;top:635px;width:46px;height:23px;background:#fff;border:1px solid #a0a0a0"></div>
<div class="t" style="left:656.00px;top:639.24px;font-size:12px;color:#000;transform:scaleX(0.9737);transform-origin:0 0;">2500</div>
<div class="a" style="left:696px;top:635px;width:17px;height:11px;background:#e4e4e4;border:1px solid #adadad;box-shadow:inset 0 0 0 1px #f4f4f4"></div>
<div class="a" style="left:696px;top:646px;width:17px;height:12px;background:#e4e4e4;border:1px solid #adadad;box-shadow:inset 0 0 0 1px #f4f4f4"></div>
<svg style="left:701px;top:639px" width="8" height="17"><path d="M0 4L3.5 0.5L7 4Z" fill="#111"/><path d="M0 10L3.5 13.5L7 10Z" fill="#111"/></svg>
<div class="a" style="left:724px;top:635px;width:59px;height:23px;background:#e5e5e5;border:1px solid #acacac"></div>
<div class="t" style="left:728.00px;top:639.84px;font-size:12px;color:#000;transform:scaleX(1.0532);transform-origin:0 0;">Auto</div>
<svg style="left:767px;top:642px" width="10" height="7"><path d="M1 1L5 5L9 1" stroke="#333" stroke-width="1.3" fill="none"/></svg>
<div class="a" style="left:307px;top:669px;width:903px;height:47px;background:#000"></div>
<div class="a" style="left:307px;top:668px;width:903px;height:1px;background:#d8d8d8"></div>
<div class="a" style="left:308px;top:670px;width:528px;height:43px;background:#7a7a7a;border:1px solid #e0e0e0;outline:1px solid #111"></div>
<div class="a" style="left:313px;top:677px;width:2px;height:28px;background:repeating-linear-gradient(#e8e8e8 0 2px,transparent 2px 4px)"></div>
<div class="a" style="left:324px;top:675px;width:32px;height:32px;background:#efefef;border:1px solid #333;border-radius:3px"></div>
<div class="a" style="left:364px;top:675px;width:32px;height:32px;background:#dff8e4;border:1px solid #333;border-radius:3px"></div>
<svg style="left:325px;top:676px" width="31" height="31"><path d="M7 22L3.5 25.5" stroke="#222" stroke-width="3.6" stroke-linecap="round"/><path d="M7 22L3.5 25.5" stroke="#c0c0c0" stroke-width="1.6" stroke-linecap="round"/><path d="M20 6.5L25 11.5L18 18.5L12 21L8.5 23L6.5 21L9 17L12.5 13Z" fill="#b4b4b4" stroke="#222" stroke-width="1.2" stroke-linejoin="round"/><path d="M19.5 6L24 1.5L29.5 7L25 11.5Z" fill="#f4f4f4" stroke="#222" stroke-width="1.2"/><path d="M23 4.5L26.5 8" stroke="#222" stroke-width="1"/></svg>
<svg style="left:365px;top:676px" width="31" height="31"><path d="M14.7 6.5A9 9 0 0 1 23.7 19.3" stroke="#10a050" stroke-width="3.6" fill="none"/><path d="M8.5 6.2L15.5 0.8V11.8Z" fill="#10a050"/><path d="M7.0 12.4A9 9 0 0 0 16.3 24.5" stroke="#10a050" stroke-width="3.6" fill="none"/><path d="M22.5 24.7L15.5 19.2V30.2Z" fill="#10a050"/></svg>
<svg style="left:403px;top:674px" width="34" height="34"><defs><radialGradient id="cg" cx="0.5" cy="0.6" r="0.6"><stop offset="0" stop-color="#a0a0a0"/><stop offset="1" stop-color="#505050"/></radialGradient></defs><circle cx="16.7" cy="16.8" r="15" fill="url(#cg)" stroke="#1a1a1a" stroke-width="1.6"/><path d="M16.7 2V31.5M2 16.8H31.5" stroke="#2a2a2a" stroke-width="1.5"/><circle cx="16.7" cy="16.8" r="3" fill="#888" stroke="#2a2a2a" stroke-width="1.4"/></svg>
<svg style="left:444px;top:675px" width="32" height="32"><defs><linearGradient id="stg" x1="0" x2="1"><stop offset="0" stop-color="#c82a2a"/><stop offset="1" stop-color="#f06a3a"/></linearGradient></defs><path d="M9.7 1H22.3L31 9.7V22.3L22.3 31H9.7L1 22.3V9.7Z" fill="url(#stg)" stroke="#fafafa" stroke-width="1.6"/><text x="16" y="21.2" font-family="Liberation Sans" font-weight="bold" font-size="11" fill="#fff" text-anchor="middle" textLength="25" lengthAdjust="spacingAndGlyphs">STOP</text></svg>
<div class="a" style="left:484px;top:677px;width:1px;height:28px;background:#a0a0a0"></div>
<div class="a" style="left:490px;top:679px;width:90px;height:23px;background:#e8e8e8;border:1px solid #acacac"></div>
<div class="t" style="left:494.00px;top:684.84px;font-size:12px;color:#000;transform:scaleX(0.9225);transform-origin:0 0;">1.0 s</div>
<svg style="left:565px;top:686px" width="10" height="7"><path d="M1 1L5 5L9 1" stroke="#333" stroke-width="1.3" fill="none"/></svg>
<div class="a" style="left:582px;top:679px;width:160px;height:24px;background:#555"></div>
<div class="a" style="left:590px;top:687px;width:144px;height:4px;background:#e6e8e6"></div>
<svg style="left:626px;top:681px" width="12" height="18"><path d="M1 1H11V12L6 17L1 12Z" fill="#e8e8e8" stroke="#888" stroke-width="1"/></svg>
<div class="a" style="left:748px;top:676px;width:1px;height:29px;background:#a0a0a0"></div>
<svg style="left:755px;top:676px" width="34" height="28"><path d="M4 14C2 8 8 2 15 3C20 1 28 3 30 9C33 13 31 19 27 20C25 24 20 23 18 21L17 26L13 25L14 21C9 22 5 19 4 14Z" fill="#f6c4b4" stroke="#b85848" stroke-width="1"/><path d="M9 10C12 8 14 11 17 9M12 15C15 13 18 16 22 13M20 7C23 8 24 11 27 10M8 17C10 18 12 17 13 18M6 12C8 11 9 13 11 12M15 5C16 7 18 6 19 8M24 15C25 13 27 15 29 14M18 18C20 17 22 19 25 17M11 6C12 5 13 6 14 5" stroke="#d07060" stroke-width="0.9" fill="none"/></svg>
<svg style="left:796px;top:677px" width="32" height="26"><path d="M4 8H10L13 4H22L24 8H29V24H4Z" fill="#8a8a8a" stroke="#aaa" stroke-width="1"/><path d="M11 21L18 14M17 11A4 4 0 1 0 22 16" stroke="#bbb" stroke-width="2.2" fill="none"/></svg>
<div class="a" style="left:307px;top:715px;width:903px;height:1px;background:#f0f0f0"></div>
<div class="a" style="left:307px;top:716px;width:903px;height:20px;background:#000"></div>
<div class="a" style="left:747px;top:716px;width:1px;height:20px;background:#e0e0e0"></div>
<div class="a" style="left:778px;top:716px;width:1px;height:20px;background:#e0e0e0"></div>
<div class="a" style="left:850px;top:716px;width:1px;height:20px;background:#e0e0e0"></div>
<div class="a" style="left:970px;top:716px;width:1px;height:20px;background:#e0e0e0"></div>
<div class="a" style="left:1090px;top:716px;width:1px;height:20px;background:#e0e0e0"></div>
<div class="a" style="left:1136px;top:716px;width:1px;height:20px;background:#e0e0e0"></div>
<div class="a" style="left:1175px;top:716px;width:1px;height:20px;background:#e0e0e0"></div>
<div class="t" style="left:310.80px;top:720.34px;font-size:12px;color:#f8f8f8;">Guiding</div>
<div class="t" style="left:785.30px;top:720.34px;font-size:12px;color:#f8f8f8;transform:scaleX(0.8681);transform-origin:0 0;">SNR</div>
<div class="t" style="left:819.60px;top:720.34px;font-size:12px;color:#10e040;transform:scaleX(0.8990);transform-origin:0 0;">19.6</div>
<div class="t" style="left:1098.00px;top:720.34px;font-size:12px;color:#e82020;transform:scaleX(0.9864);transform-origin:0 0;">Dark</div>
<div class="t" style="left:1144.00px;top:720.34px;font-size:12px;color:#10e040;transform:scaleX(0.9436);transform-origin:0 0;">Cal</div>
<svg style="left:1184px;top:717px" width="18" height="18"><defs><radialGradient id="gd" cx="0.4" cy="0.35"><stop offset="0" stop-color="#40f060"/><stop offset="1" stop-color="#10a020"/></radialGradient></defs><circle cx="9" cy="9" r="8" fill="url(#gd)"/></svg>
<div class="a" style="left:24px;top:216px;width:322px;height:250px;background:#99cff3"></div>
<div class="a" style="left:24px;top:247px;width:314px;height:211px;background:#000"></div>
<div class="t" style="left:125.00px;top:223.90px;font-size:15px;color:#333;">Target</div>
<div class="a" style="left:318px;top:222px;width:19px;height:19px;background:#d06262"></div>
<svg style="left:324px;top:228px" width="8" height="8"><path d="M1.5 1.5L6.5 6.5M6.5 1.5L1.5 6.5" stroke="#fff" stroke-width="1.5"/></svg>
<div class="a" style="left:24px;top:253px;width:39px;height:24px;background:#cfcfcf;border:1px solid #a8a8a8;border-left:none"></div>
<svg style="left:47px;top:263px" width="10" height="6"><path d="M0 0H9L4.5 5Z" fill="#404040"/></svg>
<div class="a" style="left:24px;top:277px;width:39px;height:25px;background:#efefef;border:1px solid #acacac;border-left:none"></div>
<div class="a" style="left:35px;top:289px;width:4px;height:1px;background:#000"></div>
<div class="a" style="left:24px;top:304px;width:39px;height:25px;background:#efefef;border:1px solid #acacac;border-left:none"></div>
<div class="t" style="left:27.30px;top:333.44px;font-size:12px;color:#f0f0f0;transform:scaleX(0.9683);transform-origin:0 0;">Circle</div>
<div class="a" style="left:24px;top:350px;width:21px;height:23px;background:#fff;border:1px solid #a0a0a0;border-left:none"></div>
<div class="t" style="left:24.00px;top:355.84px;font-size:12px;color:#000;transform:scaleX(0.8989);transform-origin:0 0;">2.7</div>
<div class="a" style="left:45px;top:350px;width:17px;height:11px;background:#e4e4e4;border:1px solid #adadad;box-shadow:inset 0 0 0 1px #f4f4f4"></div>
<div class="a" style="left:45px;top:361px;width:17px;height:12px;background:#e4e4e4;border:1px solid #adadad;box-shadow:inset 0 0 0 1px #f4f4f4"></div>
<svg style="left:50px;top:354px" width="8" height="17"><path d="M0 4L3.5 0.5L7 4Z" fill="#111"/><path d="M0 10L3.5 13.5L7 10Z" fill="#111"/></svg>
<svg style="left:0;top:0" width="1357" height="817"><circle cx="203.6" cy="352.1" r="20" fill="none" stroke="#a8a8a8" stroke-width="1"/><circle cx="203.6" cy="352.1" r="40" fill="none" stroke="#a8a8a8" stroke-width="1"/><circle cx="203.6" cy="352.1" r="60" fill="none" stroke="#a8a8a8" stroke-width="1"/><circle cx="203.6" cy="352.1" r="81" fill="none" stroke="#a8a8a8" stroke-width="1"/><line x1="71" y1="352.1" x2="336" y2="352.1" stroke="#a8a8a8" stroke-width="1.2"/><line x1="203.6" y1="250" x2="203.6" y2="453.5" stroke="#a8a8a8" stroke-width="1.2"/><path d="M72.3 349.6V354.6 M82.4 349.6V354.6 M92.5 349.6V354.6 M102.6 349.6V354.6 M112.7 349.6V354.6 M122.8 349.6V354.6 M132.9 349.6V354.6 M143.0 349.6V354.6 M153.1 349.6V354.6 M163.2 349.6V354.6 M173.3 349.6V354.6 M183.4 349.6V354.6 M193.5 349.6V354.6 M203.6 349.6V354.6 M213.7 349.6V354.6 M223.8 349.6V354.6 M233.9 349.6V354.6 M244.0 349.6V354.6 M254.1 349.6V354.6 M264.2 349.6V354.6 M274.3 349.6V354.6 M284.4 349.6V354.6 M294.5 349.6V354.6 M304.6 349.6V354.6 M314.7 349.6V354.6 M324.8 349.6V354.6 M334.9 349.6V354.6 M200.6 251.1H206.6 M200.6 261.2H206.6 M200.6 271.3H206.6 M200.6 281.4H206.6 M200.6 291.5H206.6 M200.6 301.6H206.6 M200.6 311.7H206.6 M200.6 321.8H206.6 M200.6 331.9H206.6 M200.6 342.0H206.6 M200.6 352.1H206.6 M200.6 362.2H206.6 M200.6 372.3H206.6 M200.6 382.4H206.6 M200.6 392.5H206.6 M200.6 402.6H206.6 M200.6 412.7H206.6 M200.6 422.8H206.6 M200.6 432.9H206.6 M200.6 443.0H206.6 M200.6 453.1H206.6" stroke="#a8a8a8" stroke-width="1"/><path d="M194.6 266.5L196.3 268.2L194.6 269.9L192.9 268.2Z M208.3 284.6L210.0 286.3L208.3 288.0L206.6 286.3Z M200.2 293.7L201.9 295.4L200.2 297.1L198.5 295.4Z M182.7 296.5L184.4 298.2L182.7 299.9L181.0 298.2Z M227.1 297.4L228.8 299.1L227.1 300.8L225.4 299.1Z M167.6 299.9L169.3 301.6L167.6 303.3L165.9 301.6Z M175.1 299.7L176.8 301.4L175.1 303.1L173.4 301.4Z M192.7 301.5L194.4 303.2L192.7 304.9L191.0 303.2Z M181.4 302.8L183.1 304.5L181.4 306.2L179.7 304.5Z M212.1 300.7L213.8 302.4L212.1 304.1L210.4 302.4Z M219.6 300.9L221.3 302.6L219.6 304.3L217.9 302.6Z M224.0 302.8L225.7 304.5L224.0 306.2L222.3 304.5Z M256.6 302.8L258.3 304.5L256.6 306.2L254.9 304.5Z M170.1 303.7L171.8 305.4L170.1 307.1L168.4 305.4Z M205.2 304.7L206.9 306.4L205.2 308.1L203.5 306.4Z M165.7 305.9L167.4 307.6L165.7 309.3L164.0 307.6Z M187.7 306.9L189.4 308.6L187.7 310.3L186.0 308.6Z M198.3 306.9L200.0 308.6L198.3 310.3L196.6 308.6Z M215.2 305.7L216.9 307.4L215.2 309.1L213.5 307.4Z M229.0 306.9L230.7 308.6L229.0 310.3L227.3 308.6Z M157.6 312.8L159.3 314.5L157.6 316.2L155.9 314.5Z M136.3 313.8L138.0 315.5L136.3 317.2L134.6 315.5Z M187.7 310.9L189.4 312.6L187.7 314.3L186.0 312.6Z M190.2 311.9L191.9 313.6L190.2 315.3L188.5 313.6Z M194.6 309.7L196.3 311.4L194.6 313.1L192.9 311.4Z M199.6 310.9L201.3 312.6L199.6 314.3L197.9 312.6Z M203.3 310.3L205.0 312.0L203.3 313.7L201.6 312.0Z M158.2 315.0L159.9 316.7L158.2 318.4L156.5 316.7Z M211.5 313.7L213.2 315.4L211.5 317.1L209.8 315.4Z M182.7 314.7L184.4 316.4L182.7 318.1L181.0 316.4Z M232.2 315.7L233.9 317.4L232.2 319.1L230.5 317.4Z M244.1 315.7L245.8 317.4L244.1 319.1L242.4 317.4Z M170.1 317.8L171.8 319.5L170.1 321.2L168.4 319.5Z M174.5 317.8L176.2 319.5L174.5 321.2L172.8 319.5Z M191.4 316.6L193.1 318.3L191.4 320.0L189.7 318.3Z M209.6 318.5L211.3 320.2L209.6 321.9L207.9 320.2Z M216.5 317.8L218.2 319.5L216.5 321.2L214.8 319.5Z M223.4 316.6L225.1 318.3L223.4 320.0L221.7 318.3Z M157.6 319.7L159.3 321.4L157.6 323.1L155.9 321.4Z M181.4 319.7L183.1 321.4L181.4 323.1L179.7 321.4Z M211.5 321.6L213.2 323.3L211.5 325.0L209.8 323.3Z M205.2 321.2L206.9 322.9L205.2 324.6L203.5 322.9Z M244.1 321.6L245.8 323.3L244.1 325.0L242.4 323.3Z M183.9 324.7L185.6 326.4L183.9 328.1L182.2 326.4Z M193.9 327.2L195.6 328.9L193.9 330.6L192.2 328.9Z M188.3 329.5L190.0 331.2L188.3 332.9L186.6 331.2Z M157.6 325.7L159.3 327.4L157.6 329.1L155.9 327.4Z M239.0 329.7L240.7 331.4L239.0 333.1L237.3 331.4Z M200.2 330.4L201.9 332.1L200.2 333.8L198.5 332.1Z M203.3 330.4L205.0 332.1L203.3 333.8L201.6 332.1Z M224.6 333.5L226.3 335.2L224.6 336.9L222.9 335.2Z M226.5 334.8L228.2 336.5L226.5 338.2L224.8 336.5Z M158.2 332.5L159.9 334.2L158.2 335.9L156.5 334.2Z M173.3 334.8L175.0 336.5L173.3 338.2L171.6 336.5Z M182.7 334.8L184.4 336.5L182.7 338.2L181.0 336.5Z M191.4 336.6L193.1 338.3L191.4 340.0L189.7 338.3Z M155.1 339.8L156.8 341.5L155.1 343.2L153.4 341.5Z M208.3 339.8L210.0 341.5L208.3 343.2L206.6 341.5Z M212.7 339.8L214.4 341.5L212.7 343.2L211.0 341.5Z M214.0 338.5L215.7 340.2L214.0 341.9L212.3 340.2Z M218.4 339.1L220.1 340.8L218.4 342.5L216.7 340.8Z M212.1 340.8L213.8 342.5L212.1 344.2L210.4 342.5Z M204.6 341.6L206.3 343.3L204.6 345.0L202.9 343.3Z M186.4 340.4L188.1 342.1L186.4 343.8L184.7 342.1Z M182.0 344.5L183.7 346.2L182.0 347.9L180.3 346.2Z M185.2 344.8L186.9 346.5L185.2 348.2L183.5 346.5Z M200.2 345.8L201.9 347.5L200.2 349.2L198.5 347.5Z M194.6 347.5L196.3 349.2L194.6 350.9L192.9 349.2Z M246.6 343.5L248.3 345.2L246.6 346.9L244.9 345.2Z M182.6 345.0L184.3 346.7L182.6 348.4L180.9 346.7Z M185.4 345.0L187.1 346.7L185.4 348.4L183.7 346.7Z M200.2 345.8L201.9 347.5L200.2 349.2L198.5 347.5Z M167.1 348.6L168.8 350.3L167.1 352.0L165.4 350.3Z M193.9 347.8L195.6 349.5L193.9 351.2L192.2 349.5Z M198.1 351.7L199.8 353.4L198.1 355.1L196.4 353.4Z M204.4 349.6L206.1 351.3L204.4 353.0L202.7 351.3Z M229.1 349.6L230.8 351.3L229.1 353.0L227.4 351.3Z M234.0 353.4L235.7 355.1L234.0 356.8L232.3 355.1Z M246.7 344.0L248.4 345.7L246.7 347.4L245.0 345.7Z M184.7 356.0L186.4 357.7L184.7 359.4L183.0 357.7Z M189.7 354.6L191.4 356.3L189.7 358.0L188.0 356.3Z M188.3 357.4L190.0 359.1L188.3 360.8L186.6 359.1Z M205.8 354.6L207.5 356.3L205.8 358.0L204.1 356.3Z M205.1 356.7L206.8 358.4L205.1 360.1L203.4 358.4Z M210.1 357.4L211.8 359.1L210.1 360.8L208.4 359.1Z M214.3 358.8L216.0 360.5L214.3 362.2L212.6 360.5Z M217.1 356.7L218.8 358.4L217.1 360.1L215.4 358.4Z M227.0 355.7L228.7 357.4L227.0 359.1L225.3 357.4Z M172.1 358.5L173.8 360.2L172.1 361.9L170.4 360.2Z M175.6 360.9L177.3 362.6L175.6 364.3L173.9 362.6Z M193.2 360.9L194.9 362.6L193.2 364.3L191.5 362.6Z M196.7 358.8L198.4 360.5L196.7 362.2L195.0 360.5Z M200.9 362.3L202.6 364.0L200.9 365.7L199.2 364.0Z M205.1 361.6L206.8 363.3L205.1 365.0L203.4 363.3Z M210.1 361.6L211.8 363.3L210.1 365.0L208.4 363.3Z M217.1 360.9L218.8 362.6L217.1 364.3L215.4 362.6Z M224.1 362.3L225.8 364.0L224.1 365.7L222.4 364.0Z M233.3 362.7L235.0 364.4L233.3 366.1L231.6 364.4Z M237.5 364.1L239.2 365.8L237.5 367.5L235.8 365.8Z M138.3 367.9L140.0 369.6L138.3 371.3L136.6 369.6Z M163.6 367.9L165.3 369.6L163.6 371.3L161.9 369.6Z M172.1 364.7L173.8 366.4L172.1 368.1L170.4 366.4Z M180.5 366.5L182.2 368.2L180.5 369.9L178.8 368.2Z M183.3 365.8L185.0 367.5L183.3 369.2L181.6 367.5Z M190.4 365.8L192.1 367.5L190.4 369.2L188.7 367.5Z M194.6 364.4L196.3 366.1L194.6 367.8L192.9 366.1Z M198.8 366.5L200.5 368.2L198.8 369.9L197.1 368.2Z M202.3 367.9L204.0 369.6L202.3 371.3L200.6 369.6Z M205.8 364.4L207.5 366.1L205.8 367.8L204.1 366.1Z M210.1 365.8L211.8 367.5L210.1 369.2L208.4 367.5Z M213.6 365.1L215.3 366.8L213.6 368.5L211.9 366.8Z M215.7 367.9L217.4 369.6L215.7 371.3L214.0 369.6Z M218.5 369.8L220.2 371.5L218.5 373.2L216.8 371.5Z M225.5 364.4L227.2 366.1L225.5 367.8L223.8 366.1Z M174.9 370.7L176.6 372.4L174.9 374.1L173.2 372.4Z M189.7 369.3L191.4 371.0L189.7 372.7L188.0 371.0Z M205.8 370.7L207.5 372.4L205.8 374.1L204.1 372.4Z M208.7 372.1L210.4 373.8L208.7 375.5L207.0 373.8Z M237.5 370.7L239.2 372.4L237.5 374.1L235.8 372.4Z M168.6 373.6L170.3 375.3L168.6 377.0L166.9 375.3Z M185.4 373.6L187.1 375.3L185.4 377.0L183.7 375.3Z M198.8 375.7L200.5 377.4L198.8 379.1L197.1 377.4Z M204.4 375.7L206.1 377.4L204.4 379.1L202.7 377.4Z M210.1 375.0L211.8 376.7L210.1 378.4L208.4 376.7Z M213.6 374.5L215.3 376.2L213.6 377.9L211.9 376.2Z M218.5 375.0L220.2 376.7L218.5 378.4L216.8 376.7Z M225.5 375.9L227.2 377.6L225.5 379.3L223.8 377.6Z M231.2 377.8L232.9 379.5L231.2 381.2L229.5 379.5Z M234.7 378.5L236.4 380.2L234.7 381.9L233.0 380.2Z M169.3 379.9L171.0 381.6L169.3 383.3L167.6 381.6Z M182.6 380.6L184.3 382.3L182.6 384.0L180.9 382.3Z M193.2 381.6L194.9 383.3L193.2 385.0L191.5 383.3Z M196.0 379.9L197.7 381.6L196.0 383.3L194.3 381.6Z M205.8 379.9L207.5 381.6L205.8 383.3L204.1 381.6Z M217.1 381.3L218.8 383.0L217.1 384.7L215.4 383.0Z M218.5 380.2L220.2 381.9L218.5 383.6L216.8 381.9Z M227.0 380.6L228.7 382.3L227.0 384.0L225.3 382.3Z M228.4 382.0L230.1 383.7L228.4 385.4L226.7 383.7Z M230.5 384.1L232.2 385.8L230.5 387.5L228.8 385.8Z M196.0 385.5L197.7 387.2L196.0 388.9L194.3 387.2Z M198.8 385.2L200.5 386.9L198.8 388.6L197.1 386.9Z M207.3 383.8L209.0 385.5L207.3 387.2L205.6 385.5Z M209.4 384.8L211.1 386.5L209.4 388.2L207.7 386.5Z M215.7 386.2L217.4 387.9L215.7 389.6L214.0 387.9Z M224.8 385.5L226.5 387.2L224.8 388.9L223.1 387.2Z M162.2 389.7L163.9 391.4L162.2 393.1L160.5 391.4Z M175.6 391.9L177.3 393.6L175.6 395.3L173.9 393.6Z M187.5 389.7L189.2 391.4L187.5 393.1L185.8 391.4Z M194.6 392.6L196.3 394.3L194.6 396.0L192.9 394.3Z M203.7 388.6L205.4 390.3L203.7 392.0L202.0 390.3Z M216.4 389.5L218.1 391.2L216.4 392.9L214.7 391.2Z M233.3 389.7L235.0 391.4L233.3 393.1L231.6 391.4Z M242.4 394.0L244.1 395.7L242.4 397.4L240.7 395.7Z M255.1 392.6L256.8 394.3L255.1 396.0L253.4 394.3Z M264.2 395.7L265.9 397.4L264.2 399.1L262.5 397.4Z M179.1 395.7L180.8 397.4L179.1 399.1L177.4 397.4Z M190.4 394.7L192.1 396.4L190.4 398.1L188.7 396.4Z M204.4 397.5L206.1 399.2L204.4 400.9L202.7 399.2Z M221.3 396.8L223.0 398.5L221.3 400.2L219.6 398.5Z M224.8 397.5L226.5 399.2L224.8 400.9L223.1 399.2Z M214.3 400.7L216.0 402.4L214.3 404.1L212.6 402.4Z M237.5 401.7L239.2 403.4L237.5 405.1L235.8 403.4Z M239.6 406.6L241.3 408.3L239.6 410.0L237.9 408.3Z M180.5 405.2L182.2 406.9L180.5 408.6L178.8 406.9Z M184.0 403.8L185.7 405.5L184.0 407.2L182.3 405.5Z M223.4 403.8L225.1 405.5L223.4 407.2L221.7 405.5Z M226.2 405.9L227.9 407.6L226.2 409.3L224.5 407.6Z M200.2 408.7L201.9 410.4L200.2 412.1L198.5 410.4Z M186.1 412.5L187.8 414.2L186.1 415.9L184.4 414.2Z M197.4 412.5L199.1 414.2L197.4 415.9L195.7 414.2Z M216.4 416.5L218.1 418.2L216.4 419.9L214.7 418.2Z M179.1 451.0L180.8 452.7L179.1 454.4L177.4 452.7Z" fill="none" stroke="#9898ff" stroke-width="1"/><path d="M195.5 313.5L203 321.5M203 313.5L195.5 321.5" stroke="#e02020" stroke-width="1.2"/></svg>
<div class="t" style="left:168.00px;top:251.69px;font-size:11px;color:#e8e8e8;transform:scaleX(0.9712);transform-origin:0 0;">Dec</div>
<div class="t" style="left:192.00px;top:257.29px;font-size:11px;color:#e8e8e8;transform:scaleX(0.9682);transform-origin:0 0;">2''</div>
<div class="t" style="left:184.00px;top:279.69px;font-size:11px;color:#e8e8e8;transform:scaleX(0.9744);transform-origin:0 0;">1.5''</div>
<div class="t" style="left:192.00px;top:298.69px;font-size:11px;color:#e8e8e8;transform:scaleX(0.9682);transform-origin:0 0;">1''</div>
<div class="t" style="left:183.00px;top:319.09px;font-size:11px;color:#e8e8e8;transform:scaleX(0.9744);transform-origin:0 0;">0.5''</div>
<div class="t" style="left:104.30px;top:338.39px;font-size:11px;color:#e8e8e8;transform:scaleX(0.9489);transform-origin:0 0;">RA</div>
<div class="t" style="left:304.90px;top:358.89px;font-size:11px;color:#e8e8e8;transform:scaleX(0.9732);transform-origin:0 0;">SkyE</div>
<div class="t" style="left:208.40px;top:441.69px;font-size:11px;color:#e8e8e8;transform:scaleX(0.9512);transform-origin:0 0;">SkyN</div>
</body></html>
